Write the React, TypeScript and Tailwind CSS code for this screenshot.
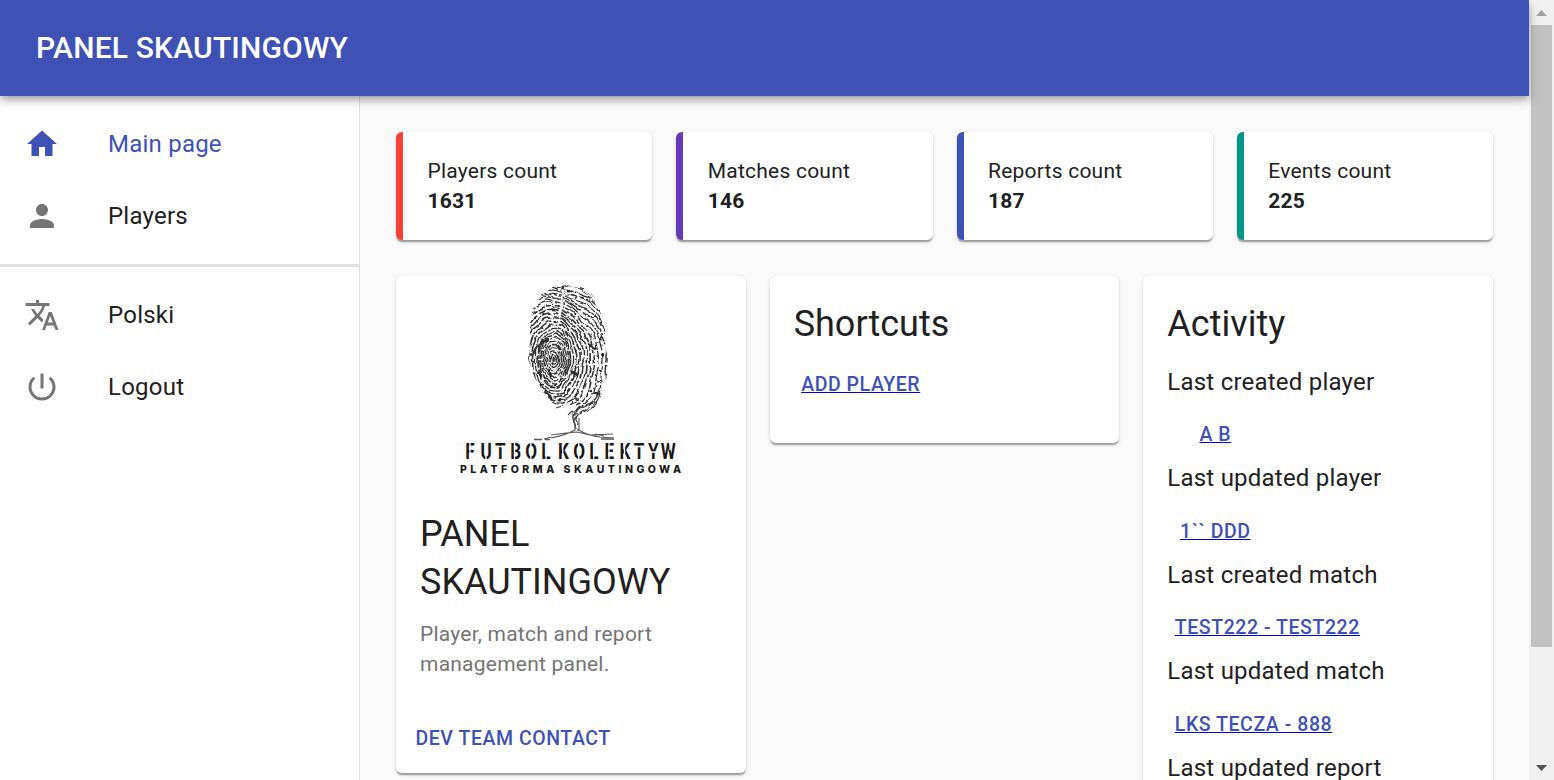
import React from "react";

const ICONS = {
  home: "M10 20v-6h4v6h5v-8h3L12 3 2 12h3v8z",
  person:
    "M12 12c2.21 0 4-1.79 4-4s-1.79-4-4-4-4 1.79-4 4 1.79 4 4 4zm0 2c-2.67 0-8 1.34-8 4v2h16v-2c0-2.66-5.33-4-8-4z",
  translate:
    "M12.87 15.07l-2.54-2.51.03-.03c1.74-1.94 2.98-4.17 3.71-6.53H17V4h-7V2H8v2H1v1.99h11.17C11.5 7.92 10.44 9.75 9 11.35 8.07 10.32 7.3 9.19 6.69 8h-2c.73 1.63 1.73 3.17 2.98 4.56l-5.09 5.02L4 19l5-5 3.11 3.11.76-2.04zM18.5 10h-2L12 22h2l1.12-3h4.75L21 22h2l-4.5-12zm-2.62 7l1.62-4.33L19.12 17h-3.24z",
  power:
    "M13 3h-2v10h2V3zm4.83 2.17l-1.42 1.42C17.99 7.86 19 9.81 19 12c0 3.87-3.13 7-7 7s-7-3.13-7-7c0-2.19 1.01-4.14 2.58-5.42L6.17 5.17C4.23 6.82 3 9.26 3 12c0 4.97 4.03 9 9 9s9-4.03 9-9c0-2.74-1.23-5.18-3.17-6.83z",
};

function NavItem({ icon, label, active }: { icon: keyof typeof ICONS; label: string; active?: boolean }) {
  return (
    <li className={`flex h-[72px] items-center pl-6 ${active ? "text-[#3f51b5]" : "text-[#212121]"}`}>
      <span className="w-[84px]">
        <svg viewBox="0 0 24 24" className={`size-9 ${active ? "fill-[#3f51b5]" : "fill-[#757575]"}`}>
          <path d={ICONS[icon]} />
        </svg>
      </span>
      <span className="text-2xl leading-9 tracking-[0.00938em]">{label}</span>
    </li>
  );
}

const CARD =
  "rounded-md bg-white shadow-[0_3px_1.5px_-1.5px_rgba(0,0,0,0.2),0_1.5px_1.5px_0_rgba(0,0,0,0.14),0_1.5px_4.5px_0_rgba(0,0,0,0.12)]";

function Stat({ label, value, border }: { label: string; value: number; border: string }) {
  return (
    <div className={`${CARD} h-[108px] border-l-[7px] py-6 pr-6 pl-[24.5px] text-[21px] leading-[30px] tracking-[0.01071em] ${border}`}>
      <p>{label}</p>
      <p className="font-bold">{value}</p>
    </div>
  );
}

function LinkButton({ children }: { children: string }) {
  return (
    <a className="inline-flex h-[46px] min-w-24 items-center justify-center px-[7.5px] pt-[2px] text-[19.5px] font-medium whitespace-pre tracking-[0.02857em] text-[#3f51b5] underline decoration-[#0000ee] decoration-[1px]">
      {children}
    </a>
  );
}

function noise(n: number) {
  const v = Math.sin(n * 127.1 + 11.7) * 43758.5453;
  return v - Math.floor(v);
}

// Ridges spread from the whorl, wobbling and breaking up like an ink print.
function ridges() {
  const out: { d: string; w: number; dash: string }[] = [];
  for (let i = 0; i < 38; i++) {
    const r = 1.5 + i * 3;
    const rx = r * (i < 8 ? 0.62 : 0.62 + Math.min(0.5, (i - 8) * 0.035));
    const ry = r * 1.08;
    let d = "";
    for (let s = 0; s <= 72; s++) {
      const a = (s / 72) * Math.PI * 2;
      const wob = 1 + 0.025 * Math.sin(a * 5 + i * 0.3) + 0.012 * Math.sin(a * 11 + i);
      const x0 = Math.cos(a) * rx * wob;
      const y0 = Math.sin(a) * ry * wob;
      const x = 114 + x0 - y0 * 0.12;
      const y = 83 + y0 + x0 * 0.3;
      d += `${s ? "L" : "M"}${x.toFixed(1)} ${y.toFixed(1)}`;
    }
    const dash = [0, 1, 2, 3, 4, 5, 6, 7]
      .map((k) => (k % 2 ? 0.8 + noise(i * 9 + k) * 1.6 : 5 + noise(i * 9 + k) * 17).toFixed(1))
      .join(" ");
    out.push({ d, w: 1.05 + noise(i) * 0.65, dash });
  }
  return out;
}

const RIDGES = ridges();
const SPECKS = Array.from({ length: 75 }, (_, i) => {
  const a = noise(i + 300) * Math.PI * 2;
  return {
    x: 128 + Math.cos(a) * (31 + noise(i + 50) * 8),
    y: 72 + Math.sin(a) * (51 + noise(i + 80) * 12),
    r: 0.4 + noise(i + 120) * 0.9,
  };
});

function Logo() {
  return (
    <svg viewBox="0 0 260 210" className="mx-auto h-[210px] w-[260px] shrink-0" fill="none">
      <defs>
        <clipPath id="print">
          <path d="M110 13L126 9L143 13L154 22L161 37L165 57L164 72L169 80L168 96L164 111L158 125L149 130L143 137L134 141L131 137L139 130L134 127L126 129L118 127L111 124L103 117L98 106L92 96L89 82L90 66L90 45L94 30L102 19Z" />
        </clipPath>
        <filter id="ink" x="0" y="0" width="1" height="1">
          <feTurbulence type="fractalNoise" baseFrequency="0.1" numOctaves="2" seed="4" result="n" />
          <feDisplacementMap in="SourceGraphic" in2="n" scale="5" xChannelSelector="R" yChannelSelector="G" result="d" />
          <feGaussianBlur in="d" stdDeviation="0.5" />
        </filter>
      </defs>
      <g filter="url(#ink)" transform="translate(-1 0)">
        <g clipPath="url(#print)" stroke="#303030">
          {RIDGES.map((r, i) => (
            <path key={i} d={r.d} strokeWidth={r.w} strokeDasharray={r.dash} />
          ))}
          <path d="M92 80Q98 65 109 64M109 93L111 102M148 68L158 73M105 115L112 123M154 115L160 118M130 96L138 100" strokeWidth="2.5" />
          <path d="M122 15Q122 32 118 49" stroke="#fff" strokeWidth="1.8" />
        </g>
        <g clipPath="url(#print)" fill="#222">
          {SPECKS.map((s, i) => (
            <circle key={i} cx={s.x} cy={s.y} r={s.r} />
          ))}
        </g>
        <path
          d="M113 125L119 128M117 132L122 130M128 139L132 135M160 118Q157 129 147 134Q137 137 134 145M156 126Q147 129 139 133Q131 138 133 144L135 153M138 139Q134 144 138 147L137 155"
          stroke="#3a3a3a"
          strokeWidth="1.1"
        />
      </g>
      <g stroke="#555" strokeWidth="1.1">
        <path d="M133 141L134 154Q125 159 110 162M138 142L138 154Q145 159 159 161M110 159L125 157L136 156L149 159L172 158M141 157L159 161L173 162M103 163L110 161M154 158L163 160" />
        <path d="M93 163.5H101M104 163.5H109M160 163H173" strokeWidth="1.6" />
      </g>
      <rect x="15" y="165" width="228" height="23" fill="#fbfbfb" />
      <g fill="#191919" fontWeight="700">
        <g transform="translate(0 183) scale(0.76 1)" fontFamily="'Roboto'" fontSize="22.5">
          <text x="32 52 71 91 111 132">FUTBOL</text>
          <text x="154 174 195 215 235 253.5 272.5 289">KOLEKTYW</text>
        </g>
        <path
          d="M29 166V184M45 178V184M57.500 170.500H63M73.500 166V184M89.800 166V184M105 178V184M121.700 166V184M137.700 166V184M152.700 178V184M168 166V184M183.500 166V184M195.500 170.500H201.500M209 176H221M229 166V174"
          stroke="#fbfbfb"
          strokeWidth="1.3"
        />
        <text x="19" y="197" fontFamily="'Inter','Open Sans'" fontWeight="800" fontSize="10.500" textLength="221" lengthAdjust="spacing">
          PLATFORMA SKAUTINGOWA
        </text>
      </g>
    </svg>
  );
}

const ACTIVITY = [
  ["Last created player", "A B"],
  ["Last updated player", "1`` DDD"],
  ["Last created match", "TEST222 - TEST222"],
  ["Last updated match", "LKS TECZA - 888"],
  ["Last updated report", ""],
];

export default function App() {
  return (
    <div className="flex h-[780px] w-[1554px] overflow-hidden bg-[#fafafa] font-['Roboto',sans-serif] text-[#212121]">
      <div className="flex min-w-0 flex-1 flex-col">
        <header className="relative z-10 flex h-24 shrink-0 items-center bg-[#3f51b5] pl-9 shadow-[0_3px_6px_-1.5px_rgba(0,0,0,0.2),0_6px_7.5px_0_rgba(0,0,0,0.14),0_1.5px_15px_0_rgba(0,0,0,0.12)]">
          <h1 className="text-[30px] leading-[48px] font-[550] tracking-[0.006em] text-white">PANEL SKAUTINGOWY</h1>
        </header>
        <div className="flex min-h-0 flex-1">
          <nav className="w-[360px] shrink-0 border-r border-[#e0e0e0] bg-white">
            <ul className="py-3">
              <NavItem icon="home" label="Main page" active />
              <NavItem icon="person" label="Players" />
            </ul>
            <hr className="border-t-[3px] border-[#e0e0e0]" />
            <ul className="py-3">
              <NavItem icon="translate" label="Polski" />
              <NavItem icon="power" label="Logout" />
            </ul>
          </nav>
          <main className="flex-1 overflow-hidden p-9">
            <section className="grid grid-cols-4 gap-6">
              <Stat label="Players count" value={1631} border="border-[#f44336]" />
              <Stat label="Matches count" value={146} border="border-[#673ab7]" />
              <Stat label="Reports count" value={187} border="border-[#3f51b5]" />
              <Stat label="Events count" value={225} border="border-[#009688]" />
            </section>
            <section className="mt-9 grid grid-cols-3 items-start gap-6">
              <article className={`${CARD} flex h-[497px] flex-col`}>
                <Logo />
                <div className="p-6">
                  <h2 className="text-4xl leading-[48px]">PANEL SKAUTINGOWY</h2>
                  <p className="mt-[12.6px] text-[21px] leading-[30px] tracking-[0.01071em] text-[#757575]">
                    Player, match and report management panel.
                  </p>
                </div>
                <div className="p-3">
                  <button className="flex h-[46px] items-center px-[7.5px] pt-[2px] text-[19.5px] font-medium tracking-[0.02857em] text-[#3f51b5]">
                    DEV TEAM CONTACT
                  </button>
                </div>
              </article>
              <article className={`${CARD} h-[167px] p-6`}>
                <h2 className="mb-[12.6px] text-4xl leading-[48px]">Shortcuts</h2>
                <LinkButton>ADD PLAYER</LinkButton>
              </article>
              <article className={`${CARD} h-[660px] p-6`}>
                <h2 className="mb-[15.6px] text-4xl leading-[48px]">Activity</h2>
                {ACTIVITY.map(([label, link]) => (
                  <div key={label} className="h-[96.5px]">
                    <p className="mb-[11.5px] text-2xl leading-9 tracking-[0.00938em]">{label}</p>
                    {link && <LinkButton>{link}</LinkButton>}
                  </div>
                ))}
              </article>
            </section>
          </main>
        </div>
      </div>
      <aside className="flex w-[25px] shrink-0 flex-col bg-[#f0f0f0] px-0.5">
        <div className="flex h-[25px] items-center justify-center">
          <svg viewBox="0 0 11 6" className="h-1.5 w-[11px]">
            <path d="M0 6L5.5 0L11 6Z" fill="#a3a3a3" />
          </svg>
        </div>
        <div className="h-[622px] bg-[#c1c1c1]" />
        <div className="mt-auto flex h-[25px] items-center justify-center">
          <svg viewBox="0 0 11 6" className="h-1.5 w-[11px]">
            <path d="M0 0L5.5 6L11 0Z" fill="#505050" />
          </svg>
        </div>
      </aside>
    </div>
  );
}
